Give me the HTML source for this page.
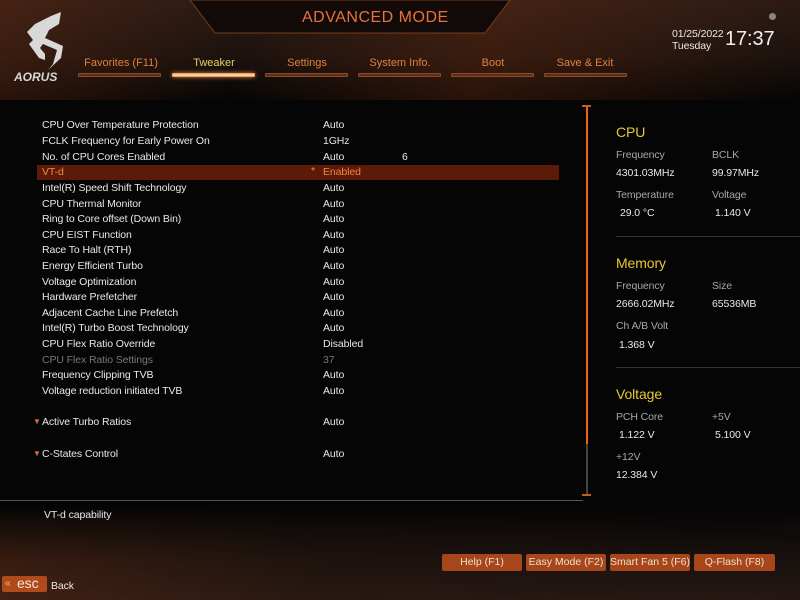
<!DOCTYPE html>
<html><head><meta charset="utf-8">
<style>
*{margin:0;padding:0;box-sizing:border-box}
body{width:800px;height:600px;overflow:hidden;background:#050505;font-family:"Liberation Sans",sans-serif;position:relative;color:#e8e8e8}
.bgtop{position:absolute;left:0;top:0;width:800px;height:100px;background:linear-gradient(180deg,#2a1a14 0%,#1c120e 55%,#050505 100%)}
.bgtop2{position:absolute;left:0;top:0;width:800px;height:100px;background:linear-gradient(100deg,rgba(120,50,20,.35) 0%,rgba(40,20,10,0) 30%,rgba(150,60,20,.25) 60%,rgba(30,20,15,0) 100%)}
.bgbot{position:absolute;left:0;top:505px;width:800px;height:95px;background:linear-gradient(180deg,rgba(5,5,5,1) 0%,#150f0d 45%,#251814 100%)}
.bgbot2{position:absolute;left:0;top:505px;width:800px;height:95px;background:linear-gradient(80deg,rgba(130,55,20,.3) 0%,rgba(60,30,15,.15) 40%,rgba(20,15,12,0) 100%);-webkit-mask:linear-gradient(180deg,transparent 0%,#000 60%)}
.t{position:absolute;font-size:10.5px;line-height:14px;white-space:nowrap;letter-spacing:-0.1px}
.tab{position:absolute;top:57px;font-size:11px;color:#e2803c;text-align:center;width:90px}
.bar{position:absolute;top:73px;width:83px;height:4px;background:#5a2e1a;border:1px solid #8a4a2a;border-radius:1px}
.y{color:#e8c830;font-size:14px}
.g{color:#a8a8a8}
.btn{position:absolute;top:554px;height:17px;background:#a6461a;color:#f0e0d0;font-size:10.5px;line-height:17px;text-align:center;border-radius:2px}
</style></head><body>
<div class="bgtop"></div><div class="bgtop2"></div><div class="bgbot"></div><div class="bgbot2"></div>
<svg style="position:absolute;left:180px;top:0" width="340" height="36"><polygon points="10,0 330,0 305,33 35,33" fill="#120a08" stroke="#7a3a1a" stroke-width="1"/></svg>
<div class="t" style="left:302px;top:8px;font-size:16px;line-height:20px;color:#e8723a;letter-spacing:0.5px">ADVANCED MODE</div>
<svg style="position:absolute;left:15px;top:10px" width="50" height="62"><polygon points="46,2 36,6 20,14 12,22 18,30 14,34 24,48 30,50 30,44 25,38 28,34 42,40 38,54 33,60 46,48 48,36 30,28 34,20 44,14" fill="#d8d8d8"/></svg>
<div class="t" style="left:14px;top:70px;font-size:12px;font-style:italic;font-weight:bold;color:#d8d8d8;letter-spacing:0">AORUS</div>
<div class="t" style="left:672px;top:27px;font-size:10.5px;color:#e8e8e8">01/25/2022</div>
<div class="t" style="left:672px;top:39px;font-size:10.5px;color:#e8e8e8">Tuesday</div>
<div class="t" style="left:725px;top:28px;font-size:20px;line-height:22px;color:#f0f0f0">17:37</div>
<div style="position:absolute;left:769px;top:13px;width:7px;height:7px;border-radius:50%;background:#888"></div>
<div class="tab" style="left:76px">Favorites (F11)</div>
<div class="tab" style="left:169px;color:#e8d060">Tweaker</div>
<div class="tab" style="left:262px">Settings</div>
<div class="tab" style="left:355px">System Info.</div>
<div class="tab" style="left:448px">Boot</div>
<div class="tab" style="left:540px">Save &amp; Exit</div>
<div class="bar" style="left:78px"></div>
<div class="bar" style="left:172px;background:#f8d0a0;border-color:#f0a060;box-shadow:0 0 4px #e08040"></div>
<div class="bar" style="left:265px"></div>
<div class="bar" style="left:358px"></div>
<div class="bar" style="left:451px"></div>
<div class="bar" style="left:544px"></div>
<div style="position:absolute;left:37px;top:165px;width:522px;height:15px;background:#5c1a08"></div>
<div class="t" style="left:42px;top:118px">CPU Over Temperature Protection</div><div class="t" style="left:323px;top:118px">Auto</div>
<div class="t" style="left:42px;top:134px">FCLK Frequency for Early Power On</div><div class="t" style="left:323px;top:134px">1GHz</div>
<div class="t" style="left:42px;top:150px">No. of CPU Cores Enabled</div><div class="t" style="left:323px;top:150px">Auto</div><div class="t" style="left:402px;top:150px">6</div>
<div class="t" style="left:42px;top:165px;color:#f08a40">VT-d</div><div class="t" style="left:311px;top:164px;color:#f08a40">*</div><div class="t" style="left:323px;top:165px;color:#f08a40">Enabled</div>
<div class="t" style="left:42px;top:181px">Intel(R) Speed Shift Technology</div><div class="t" style="left:323px;top:181px">Auto</div>
<div class="t" style="left:42px;top:197px">CPU Thermal Monitor</div><div class="t" style="left:323px;top:197px">Auto</div>
<div class="t" style="left:42px;top:212px">Ring to Core offset (Down Bin)</div><div class="t" style="left:323px;top:212px">Auto</div>
<div class="t" style="left:42px;top:228px">CPU EIST Function</div><div class="t" style="left:323px;top:228px">Auto</div>
<div class="t" style="left:42px;top:243px">Race To Halt (RTH)</div><div class="t" style="left:323px;top:243px">Auto</div>
<div class="t" style="left:42px;top:259px">Energy Efficient Turbo</div><div class="t" style="left:323px;top:259px">Auto</div>
<div class="t" style="left:42px;top:275px">Voltage Optimization</div><div class="t" style="left:323px;top:275px">Auto</div>
<div class="t" style="left:42px;top:290px">Hardware Prefetcher</div><div class="t" style="left:323px;top:290px">Auto</div>
<div class="t" style="left:42px;top:306px">Adjacent Cache Line Prefetch</div><div class="t" style="left:323px;top:306px">Auto</div>
<div class="t" style="left:42px;top:321px">Intel(R) Turbo Boost Technology</div><div class="t" style="left:323px;top:321px">Auto</div>
<div class="t" style="left:42px;top:337px">CPU Flex Ratio Override</div><div class="t" style="left:323px;top:337px">Disabled</div>
<div class="t" style="left:42px;top:353px;color:#777">CPU Flex Ratio Settings</div><div class="t" style="left:323px;top:353px;color:#777">37</div>
<div class="t" style="left:42px;top:368px">Frequency Clipping TVB</div><div class="t" style="left:323px;top:368px">Auto</div>
<div class="t" style="left:42px;top:384px">Voltage reduction initiated TVB</div><div class="t" style="left:323px;top:384px">Auto</div>
<div class="t" style="left:33px;top:415px;color:#e07030;font-size:8px">▼</div><div class="t" style="left:42px;top:415px">Active Turbo Ratios</div><div class="t" style="left:323px;top:415px">Auto</div>
<div class="t" style="left:33px;top:447px;color:#e07030;font-size:8px">▼</div><div class="t" style="left:42px;top:447px">C-States Control</div><div class="t" style="left:323px;top:447px">Auto</div>
<div style="position:absolute;left:582px;top:105px;width:9px;height:2px;background:#c85a20"></div>
<div style="position:absolute;left:586px;top:107px;width:2px;height:337px;background:#e8641c"></div>
<div style="position:absolute;left:586px;top:444px;width:2px;height:50px;background:#444"></div>
<div style="position:absolute;left:582px;top:494px;width:9px;height:2px;background:#c85a20"></div>
<div style="position:absolute;left:0;top:500px;width:583px;height:1px;background:#555"></div>
<div class="t" style="left:44px;top:508px">VT-d capability</div>
<div class="t y" style="left:616px;top:124px;line-height:16px">CPU</div>
<div class="t g" style="left:616px;top:148px">Frequency</div><div class="t g" style="left:712px;top:148px">BCLK</div>
<div class="t" style="left:616px;top:166px">4301.03MHz</div><div class="t" style="left:712px;top:166px">99.97MHz</div>
<div class="t g" style="left:616px;top:188px">Temperature</div><div class="t g" style="left:712px;top:188px">Voltage</div>
<div class="t" style="left:620px;top:206px">29.0 °C</div><div class="t" style="left:715px;top:206px">1.140 V</div>
<div style="position:absolute;left:616px;top:236px;width:184px;height:1px;background:#333"></div>
<div class="t y" style="left:616px;top:255px;line-height:16px">Memory</div>
<div class="t g" style="left:616px;top:279px">Frequency</div><div class="t g" style="left:712px;top:279px">Size</div>
<div class="t" style="left:616px;top:297px">2666.02MHz</div><div class="t" style="left:712px;top:297px">65536MB</div>
<div class="t g" style="left:616px;top:319px">Ch A/B Volt</div>
<div class="t" style="left:619px;top:338px">1.368 V</div>
<div style="position:absolute;left:616px;top:367px;width:184px;height:1px;background:#333"></div>
<div class="t y" style="left:616px;top:386px;line-height:16px">Voltage</div>
<div class="t g" style="left:616px;top:410px">PCH Core</div><div class="t g" style="left:712px;top:410px">+5V</div>
<div class="t" style="left:619px;top:428px">1.122 V</div><div class="t" style="left:715px;top:428px">5.100 V</div>
<div class="t g" style="left:616px;top:450px">+12V</div>
<div class="t" style="left:616px;top:468px">12.384 V</div>
<div class="btn" style="left:442px;width:80px">Help (F1)</div>
<div class="btn" style="left:526px;width:80px">Easy Mode (F2)</div>
<div class="btn" style="left:610px;width:80px">Smart Fan 5 (F6)</div>
<div class="btn" style="left:694px;width:81px">Q-Flash (F8)</div>
<div style="position:absolute;left:2px;top:576px;width:45px;height:16px;background:#b04a1a;border-radius:2px"></div>
<div class="t" style="left:5px;top:577px;color:#f0c080;font-size:10px">«</div>
<div class="t" style="left:17px;top:575px;font-size:14px;line-height:16px;color:#f0e8e0">esc</div>
<div class="t" style="left:51px;top:579px">Back</div>
</body></html>
